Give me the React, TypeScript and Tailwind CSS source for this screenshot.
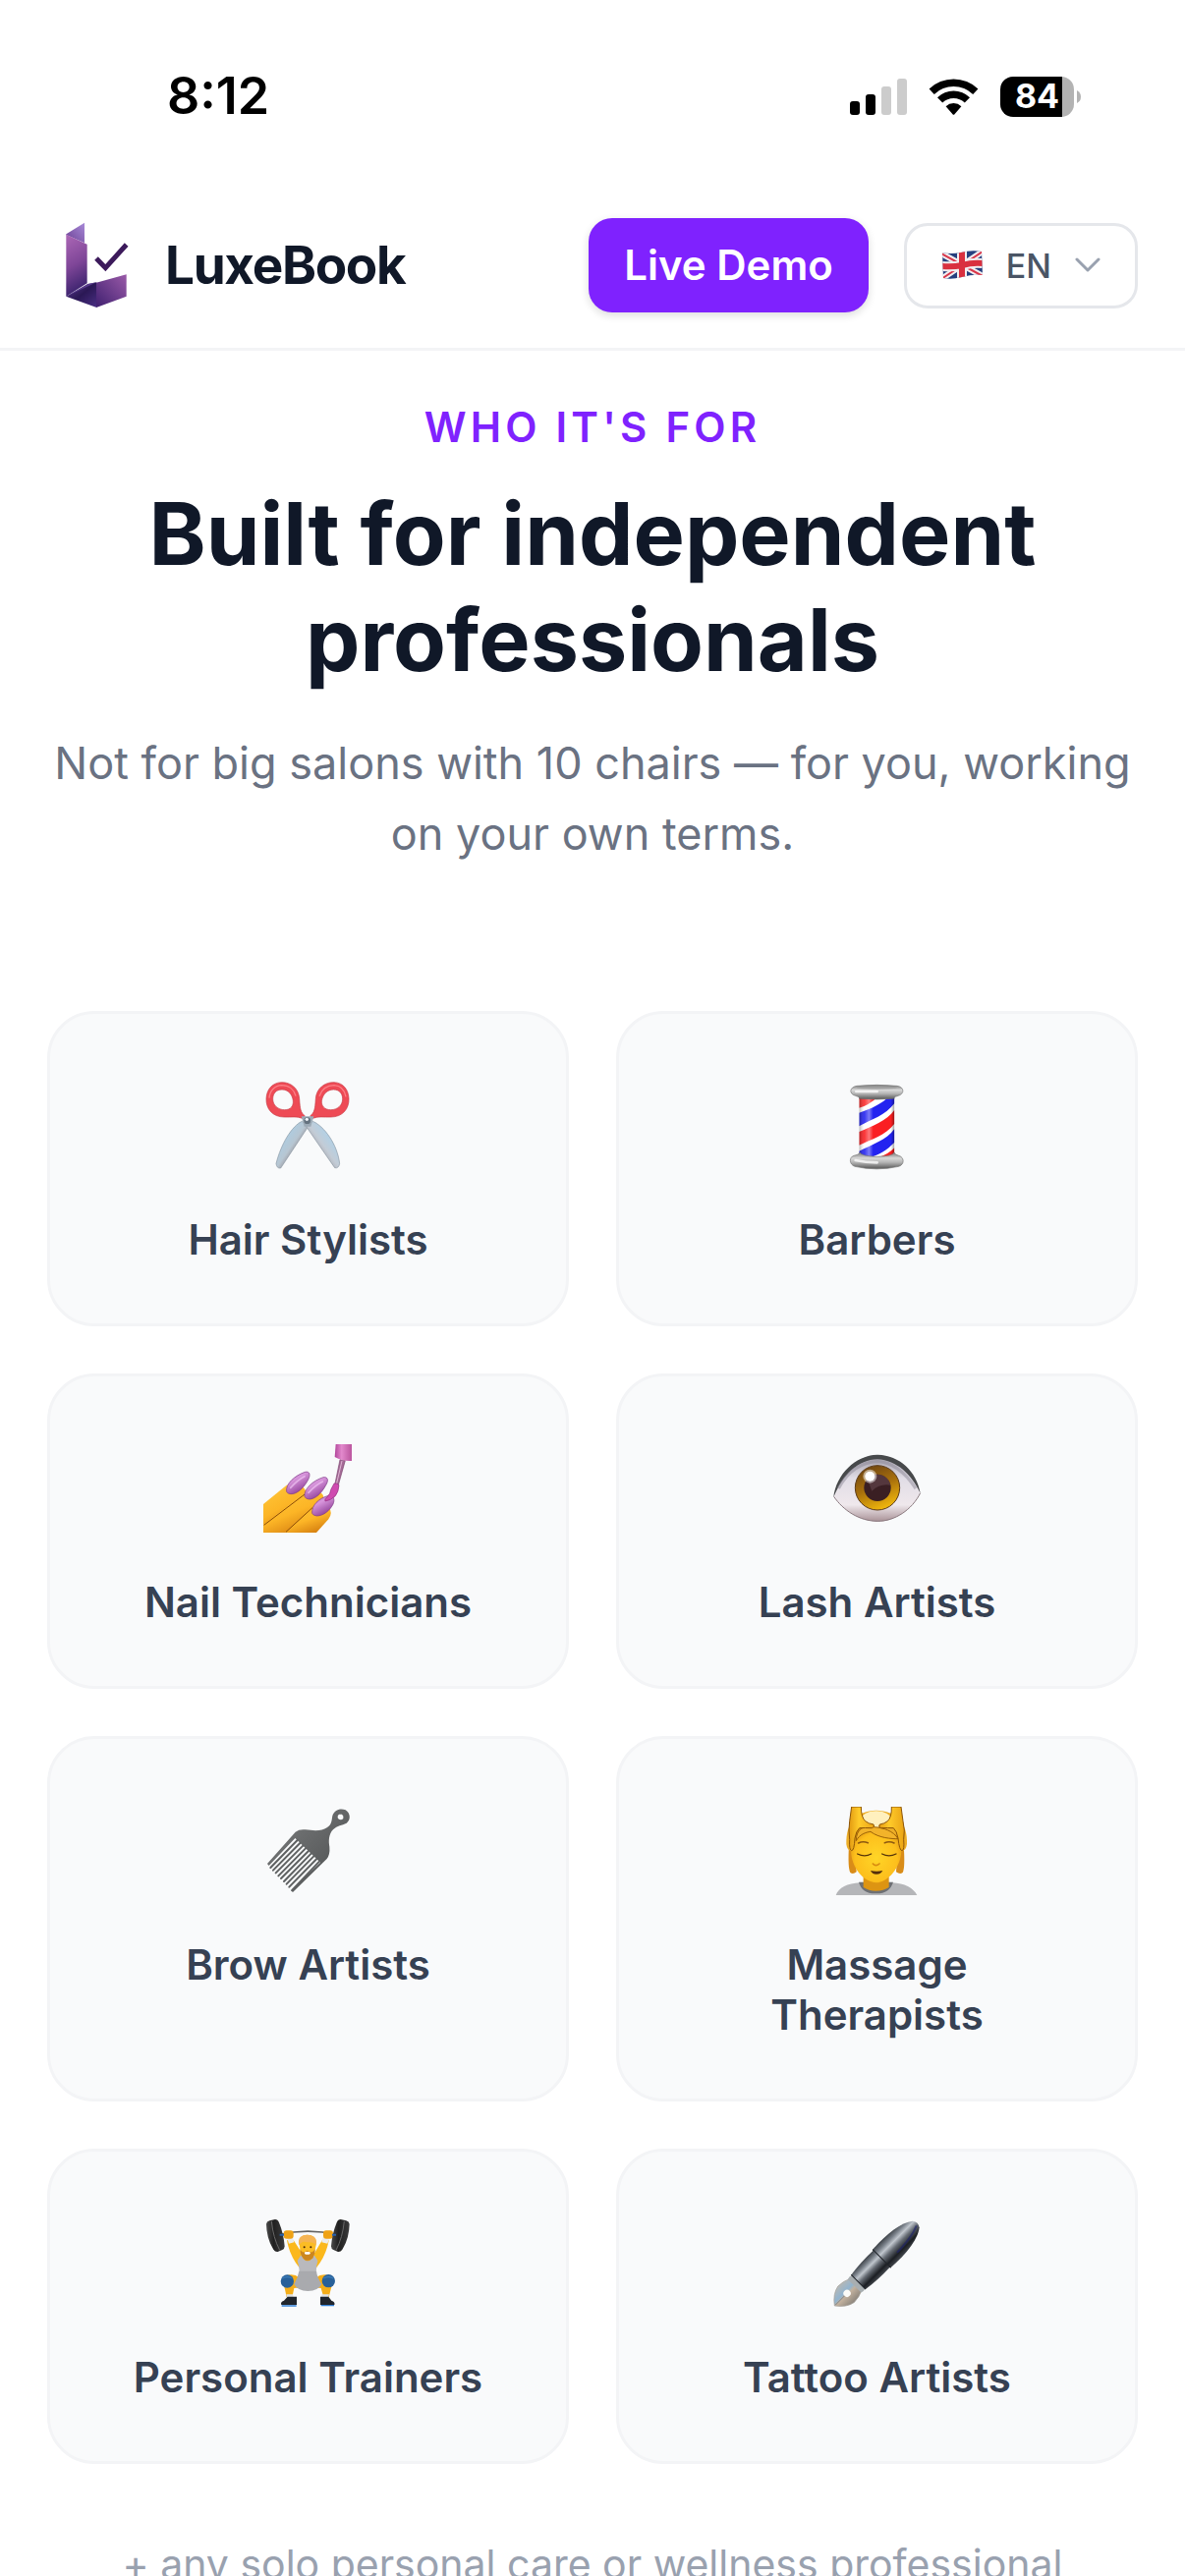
import type { ReactNode } from 'react'

interface Audience {
  label: string
  icon: ReactNode
}

function Logo() {
  return (
    <svg viewBox="24 21 288 288" className="size-24" aria-hidden="true">
      <defs>
        <linearGradient id="logoTop" x1="1" y1="0" x2="0" y2="1">
          <stop offset="0" stopColor="#a88ad8" />
          <stop offset="1" stopColor="#6b3f93" />
        </linearGradient>
        <linearGradient id="logoStem" x1="0.2" y1="0" x2="0.4" y2="1">
          <stop offset="0" stopColor="#a965b4" />
          <stop offset="0.5" stopColor="#7f4698" />
          <stop offset="1" stopColor="#35206a" />
        </linearGradient>
        <linearGradient id="logoFold" x1="0" y1="0" x2="1" y2="1">
          <stop offset="0" stopColor="#5c3c92" />
          <stop offset="0.5" stopColor="#2b1855" />
          <stop offset="1" stopColor="#4a2f84" />
        </linearGradient>
        <linearGradient id="logoFoot" x1="0" y1="1" x2="1" y2="0">
          <stop offset="0" stopColor="#3f2070" />
          <stop offset="1" stopColor="#9a5aa8" />
        </linearGradient>
      </defs>
      <path d="M82 70 L138 35 V97 L82 72 Z" fill="url(#logoTop)" />
      <path d="M82 71 L146 101 V220 L82 260 Z" fill="url(#logoStem)" />
      <path d="M82 260 L148 222 L175 217 V294 Z" fill="url(#logoFold)" />
      <path d="M82 260 L148 222 L175 217 Z" fill="#65469d" opacity="0.7" />
      <path d="M174 218 L266 193 V260 L174 294 Z" fill="url(#logoFoot)" />
      <path d="M174 144 L202 173 L266 102" fill="none" stroke="#3c1a5b" strokeWidth="15" />
    </svg>
  )
}

function Scissors() {
  return (
    <svg viewBox="85 60 270 270" className="size-[90px]" role="img" aria-label="Scissors">
      <defs>
        <linearGradient id="bladeA" x1="0" y1="0" x2="1" y2="1">
          <stop offset="0.2" stopColor="#a9cfe8" />
          <stop offset="0.5" stopColor="#b7c6d2" />
          <stop offset="0.7" stopColor="#8d7e80" />
        </linearGradient>
        <linearGradient id="bladeB" x1="1" y1="0" x2="0" y2="1">
          <stop offset="0.2" stopColor="#a9d3ee" />
          <stop offset="0.5" stopColor="#c3ccd6" />
          <stop offset="0.8" stopColor="#958a8e" />
        </linearGradient>
      </defs>
      <path d="M200 181 C168 196 136 251 121 310 Q123 326 135 324 L219 197 Z" fill="url(#bladeA)" stroke="#8b99a5" strokeWidth="2" />
      <path d="M233 181 C268 196 308 251 315 310 Q312 326 300 323 L213 197 Z" fill="url(#bladeB)" stroke="#8b99a5" strokeWidth="2" />
      <path fillRule="evenodd" d="M137 62 C165 61 190 80 192 112 C194 145 196 154 209 165 L201 172 C185 165 167 169 146 168 C110 168 90 143 91 112 C92 83 110 63 137 62 Z M139 84 C121 84 111 96 111 113 C111 132 127 146 147 146 C166 146 174 134 173 119 C171 99 158 84 139 84 Z" fill="#ee4a55" stroke="#c73a44" strokeWidth="2" />
      <path fillRule="evenodd" d="M298 62 C270 61 244 80 242 112 C240 145 238 154 225 165 L233 172 C249 165 267 169 288 168 C324 168 344 143 343 112 C342 83 325 63 298 62 Z M296 84 C314 84 324 96 324 113 C324 132 308 146 288 146 C269 146 259 134 260 119 C263 99 277 84 296 84 Z" fill="#ee4a55" stroke="#c73a44" strokeWidth="2" />
      <path d="M100 110 C102 86 118 72 138 71 C160 71 176 84 181 104" fill="none" stroke="#ff8d92" strokeWidth="4" opacity="0.8" />
      <path d="M253 104 C260 84 276 71 298 71 C318 72 330 86 334 106" fill="none" stroke="#ff8d92" strokeWidth="4" opacity="0.8" />
      <path d="M198 166 H236 L227 197 H207 Z" fill="#9caab6" />
      <circle cx="216" cy="179" r="10" fill="#64727f" />
      <circle cx="215" cy="175" r="5" fill="#f2f6fa" />
    </svg>
  )
}

function BarberPole() {
  return (
    <svg viewBox="52 60 270 270" className="size-[90px]" role="img" aria-label="Barber pole">
      <defs>
        <linearGradient id="poleCap" x1="0" y1="0" x2="0" y2="1">
          <stop offset="0" stopColor="#777" />
          <stop offset="0.35" stopColor="#d8d8d8" />
          <stop offset="0.6" stopColor="#b5b5b5" />
          <stop offset="1" stopColor="#555" />
        </linearGradient>
        <linearGradient id="poleShine" x1="0" y1="0" x2="1" y2="0">
          <stop offset="0" stopColor="#000" stopOpacity="0.3" />
          <stop offset="0.15" stopColor="#fff" stopOpacity="0.1" />
          <stop offset="0.28" stopColor="#fff" stopOpacity="0.4" />
          <stop offset="0.4" stopColor="#fff" stopOpacity="0" />
          <stop offset="0.9" stopColor="#000" stopOpacity="0" />
          <stop offset="1" stopColor="#000" stopOpacity="0.4" />
        </linearGradient>
        <clipPath id="poleBody">
          <rect x="131" y="104" width="108" height="186" />
        </clipPath>
      </defs>
      <g clipPath="url(#poleBody)">
        <rect x="131" y="100" width="108" height="192" fill="#fff" />
        <path d="M131 96 H200 Q160 134 131 140 Z" fill="#fa2a2a" />
        <path d="M131 155 C170 142 205 126 226 100 H239 V126 C210 164 170 174 131 196 Z" fill="#2323f0" />
        <path d="M131 213 C170 196 215 180 239 146 V188 C210 226 170 234 131 254 Z" fill="#fa1f22" />
        <path d="M131 272 C170 252 215 238 239 204 V245 C215 270 190 284 160 292 H131 Z" fill="#2323f0" />
        <path d="M188 292 Q220 282 239 262 V292 Z" fill="#fa1f22" />
        <rect x="131" y="100" width="108" height="192" fill="url(#poleShine)" />
      </g>
      <path d="M131 104 H239 V113 H131 Z" fill="#444" opacity="0.55" />
      <path d="M124 73 Q185 67 247 73 C270 76 270 98 250 103 Q240 105 236 111 Q185 117 133 111 Q129 105 120 103 C100 98 100 77 124 73 Z" fill="url(#poleCap)" stroke="#777" strokeWidth="2" />
      <ellipse cx="185" cy="78" rx="62" ry="5" fill="#999" opacity="0.6" />
      <path d="M122 90 H186" stroke="#fff" strokeWidth="8" strokeLinecap="round" opacity="0.75" />
      <path d="M133 276 Q130 284 115 286 C100 290 100 313 118 319 Q185 334 252 319 C270 313 270 291 252 286 Q241 284 238 276 Q236 287 185 289 Q137 287 133 276 Z" fill="url(#poleCap)" stroke="#777" strokeWidth="2" />
      <path d="M120 300 Q150 307 186 307" stroke="#fff" strokeWidth="8" fill="none" strokeLinecap="round" opacity="0.75" />
    </svg>
  )
}

function NailPolish() {
  return (
    <svg viewBox="84 57 270 270" className="size-[90px] overflow-visible" role="img" aria-label="Nail polish">
      <defs>
        <linearGradient id="finger" x1="0" y1="0" x2="0.6" y2="1">
          <stop offset="0" stopColor="#ffc93c" />
          <stop offset="0.6" stopColor="#fcb526" />
          <stop offset="1" stopColor="#d98412" />
        </linearGradient>
        <linearGradient id="nail" x1="0" y1="0" x2="0.6" y2="1">
          <stop offset="0" stopColor="#a65cb0" />
          <stop offset="0.4" stopColor="#d896dc" />
          <stop offset="1" stopColor="#8b3a94" />
        </linearGradient>
        <linearGradient id="brushCap" x1="0" y1="0" x2="1" y2="0">
          <stop offset="0" stopColor="#b1459a" />
          <stop offset="0.4" stopColor="#e289cc" />
          <stop offset="1" stopColor="#bb559e" />
        </linearGradient>
      </defs>
      <path d="M81 240 L152 182 Q175 172 196 184 Q216 198 211 212 L87 306 H81 Z" fill="url(#finger)" />
      <path d="M81 304 L202 208 Q222 195 244 199 Q270 208 265 228 L152 327 H81 Z" fill="url(#finger)" />
      <path d="M148 327 L232 250 Q262 240 282 252 Q294 266 280 286 L243 327 Z" fill="url(#finger)" />
      <path d="M83 304 L207 210 M150 325 L232 250" stroke="#8a4a07" strokeWidth="3" fill="none" />
      <path d="M152 202 C148 178 178 152 208 142 C224 138 225 152 218 165 C205 190 184 210 165 209 Q155 209 152 202 Z" fill="url(#nail)" stroke="#7d3b86" strokeWidth="2" />
      <path d="M207 217 C204 194 232 168 264 158 C280 156 280 169 272 182 C258 208 238 226 220 225 Q210 224 207 217 Z" fill="url(#nail)" stroke="#7d3b86" strokeWidth="2" />
      <path d="M230 268 C228 244 250 222 280 214 C296 212 300 226 294 240 C284 260 264 276 244 276 Q233 275 230 268 Z" fill="url(#nail)" stroke="#7d3b86" strokeWidth="2" />
      <path d="M164 190 Q184 167 207 155 M219 205 Q240 182 262 171" stroke="#f0c4f2" strokeWidth="5" strokeLinecap="round" fill="none" opacity="0.7" />
      <path d="M315 104 L331 107 L309 185 L299 182 Z" fill="#a46b96" stroke="#7c4470" strokeWidth="2" />
      <path d="M321 108 L304 180" stroke="#e0b5d4" strokeWidth="3" />
      <path d="M297 177 Q306 174 312 182 Q311 203 300 216 Q286 229 270 231 Q266 225 277 217 Q286 208 287 196 Z" fill="#cf4bb0" stroke="#93307e" strokeWidth="2" />
      <path d="M302 57 H351 V108 Q324 110 299 96 Z" fill="url(#brushCap)" />
    </svg>
  )
}

function Eye() {
  return (
    <svg viewBox="82 57 270 270" className="size-[90px]" role="img" aria-label="Eye">
      <defs>
        <linearGradient id="eyeWhite" x1="0" y1="0" x2="0" y2="1">
          <stop offset="0" stopColor="#9d98a4" />
          <stop offset="0.35" stopColor="#e1dde6" />
          <stop offset="0.75" stopColor="#efe8ec" />
          <stop offset="1" stopColor="#a99297" />
        </linearGradient>
        <linearGradient id="iris" x1="0.2" y1="0" x2="0.6" y2="1">
          <stop offset="0" stopColor="#6b4212" />
          <stop offset="0.5" stopColor="#a8700c" />
          <stop offset="1" stopColor="#f2b80c" />
        </linearGradient>
      </defs>
      <path d="M84 211 C112 136 158 91 217 90 C278 92 326 136 348 204 C322 258 270 293 218 293 C160 292 112 258 84 217 Z" fill="url(#eyeWhite)" />
      <path d="M83 219 C90 150 150 90 217 89 C286 91 336 140 348 206 C320 150 278 106 217 103 C158 104 112 150 83 219 Z" fill="#47494b" />
      <path d="M98 192 C126 140 166 112 217 110 C268 112 306 150 334 192" fill="none" stroke="#8d8998" strokeWidth="10" opacity="0.5" />
      <path d="M84 217 C112 258 160 292 218 292 C270 292 322 258 348 206" fill="none" stroke="#8c7b81" strokeWidth="3" />
      <circle cx="217" cy="190" r="68" fill="url(#iris)" stroke="#5b3a17" strokeWidth="3" />
      <circle cx="217" cy="190" r="41" fill="#3a1f23" />
      <path d="M186 163 A41 41 0 0 1 257 182 Q225 176 200 200 Z" fill="#6d5058" opacity="0.5" />
      <circle cx="194" cy="155" r="21" fill="#fff" opacity="0.5" />
      <circle cx="194" cy="155" r="15" fill="#fff" />
    </svg>
  )
}

function Comb() {
  return (
    <svg viewBox="85 54 270 270" className="size-[90px]" role="img" aria-label="Hair pick">
      <defs>
        <linearGradient id="comb" x1="0" y1="0" x2="1" y2="1">
          <stop offset="0" stopColor="#7d7f80" />
          <stop offset="0.5" stopColor="#636566" />
          <stop offset="1" stopColor="#484a4b" />
        </linearGradient>
      </defs>
      <path fillRule="evenodd" d="M94 228 L180 131 Q192 122 210 124 C240 128 262 128 276 118 C292 108 290 96 293 82 C298 63 318 57 333 64 C349 74 349 95 336 104 C322 112 308 110 295 124 C281 138 281 160 284 176 Q286 200 276 213 L172 315 L166 310 L256 224 L179 150 L99 234 Z M313 77 Q306 83 311 91 Q319 97 326 90 Q328 81 322 77 Z" fill="url(#comb)" />
      <path d="M186 156 L104 240 M194 165 L112 248 M203 173 L120 256 M211 181 L128 265 M220 189 L136 273 M228 197 L145 282 M236 205 L153 290 M245 213 L161 299 M253 221 L170 309" stroke="#5f6162" strokeWidth="6" strokeLinecap="round" />
    </svg>
  )
}

function Massage() {
  return (
    <svg viewBox="82 54 270 270" className="size-[90px]" role="img" aria-label="Head massage">
      <defs>
        <radialGradient id="massageFace" cx="0.5" cy="0.55" r="0.6">
          <stop offset="0" stopColor="#ffd527" />
          <stop offset="0.7" stopColor="#fdbf1c" />
          <stop offset="1" stopColor="#de9210" />
        </radialGradient>
        <linearGradient id="massageHand" x1="0" y1="0" x2="1" y2="0">
          <stop offset="0" stopColor="#e39a12" />
          <stop offset="0.4" stopColor="#ffcb2a" />
          <stop offset="1" stopColor="#eaa416" />
        </linearGradient>
      </defs>
      <path d="M90 324 C98 302 125 288 164 286 H262 C300 288 326 302 338 324 Z" fill="#b5b6b9" />
      <path d="M130 170 Q126 240 134 255 Q142 262 153 253 L150 200 Z M297 170 Q302 240 294 255 Q286 262 274 253 L278 200 Z" fill="#d98c18" />
      <path d="M160 284 Q170 320 212 319 Q254 320 265 284 Z" fill="#6e7074" />
      <path d="M174 268 V300 Q190 311 212 311 Q236 311 252 300 V268 Z" fill="#dd9412" />
      <path d="M122 168 C120 102 154 66 213 65 C274 66 309 102 307 168 Q304 190 290 190 H138 Q124 188 122 168 Z" fill="#edae27" />
      <ellipse cx="213" cy="92" rx="45" ry="25" fill="#fff0be" />
      <path d="M136 150 C148 120 172 110 200 118 L276 140 Q292 150 290 188 C288 240 250 284 213 286 C174 284 138 240 136 190 Z" fill="url(#massageFace)" />
      <path d="M152 158 C152 122 174 110 206 116 C236 118 266 128 280 152 C260 152 222 150 196 130 C182 132 162 138 152 158 Z" fill="#f2b32a" stroke="#9c6208" strokeWidth="3" />
      <path d="M138 54 H167 Q167 86 180 98 Q190 106 205 108 Q211 116 200 119 Q178 118 162 119 Q152 128 148 150 Q146 188 138 188 Q130 187 132 154 Q128 126 132 98 Z" fill="url(#massageHand)" stroke="#8c5406" strokeWidth="3" />
      <path d="M289 54 H260 Q261 86 248 98 Q238 106 224 108 Q218 116 228 119 Q250 118 266 119 Q276 128 280 150 Q284 188 292 188 Q300 187 297 154 Q302 126 295 98 Z" fill="url(#massageHand)" stroke="#8c5406" strokeWidth="3" />
      <path d="M159 165 Q172 158 188 164 M239 164 Q254 158 268 165" stroke="#8d5910" strokeWidth="5" fill="none" strokeLinecap="round" />
      <path d="M156 198 Q178 209 198 198 M231 198 Q252 209 274 198" stroke="#573509" strokeWidth="4" fill="none" strokeLinecap="round" />
      <path d="M203 228 Q212 238 223 228" stroke="#d88b10" strokeWidth="5" fill="none" strokeLinecap="round" />
      <path d="M196 249 Q214 253 233 249 Q228 260 214 260 Q200 260 196 249 Z" fill="#552f0c" />
    </svg>
  )
}

function Weightlifter() {
  return (
    <svg viewBox="85 54 270 270" className="size-[90px]" role="img" aria-label="Weightlifter">
      <defs>
        <linearGradient id="plate" x1="0" y1="0" x2="1" y2="0">
          <stop offset="0" stopColor="#4a4a4a" />
          <stop offset="0.4" stopColor="#202020" />
          <stop offset="1" stopColor="#3b3b3b" />
        </linearGradient>
      </defs>
      <path d="M130 101 Q218 80 306 101" fill="none" stroke="#646464" strokeWidth="5" />
      <path d="M154 118 L174 117 L208 170 L192 202 Q162 164 154 118 Z M282 118 L262 117 L230 170 L244 202 Q274 164 282 118 Z" fill="#fbb81c" />
      <path d="M155 112 L172 109 L176 124 L160 128 Z M283 112 L264 109 L260 124 L278 128 Z" fill="#ececec" />
      <rect x="144" y="88" width="30" height="25" rx="9" fill="#efa216" />
      <rect x="265" y="88" width="30" height="25" rx="9" fill="#efa216" />
      <path d="M196 164 Q216 176 238 164 L248 180 Q240 212 246 240 Q218 250 190 240 Q196 212 186 180 Z" fill="#b9b9bd" />
      <path d="M202 172 Q216 190 234 172 L230 160 H206 Z" fill="#eaa113" />
      {/* legs */}
      <path d="M192 232 Q174 218 152 226 Q138 240 148 268 L153 292 H170 L176 264 Q186 262 196 266 Z" fill="#f4ad19" />
      <path d="M242 232 Q262 218 284 226 Q298 240 288 268 L282 292 H266 L258 264 Q250 262 240 266 Z" fill="#f4ad19" />
      <path d="M191 212 Q188 230 176 252 Q186 272 218 273 Q250 272 260 252 Q246 230 244 212 Z" fill="#a9aaae" />
      <circle cx="155" cy="243" r="20" fill="#286099" />
      <circle cx="281" cy="242" r="20" fill="#286099" />
      <path d="M140 234 Q154 226 170 234 M266 234 Q280 225 296 234" stroke="#3e7db8" strokeWidth="4" fill="none" />
      <path d="M152 283 H172 L175 296 H155 Z M261 283 H283 L279 296 H258 Z" fill="#dfe2e5" />
      <path d="M156 290 H184 V315 H137 Q133 306 145 302 Z" fill="#20252c" />
      <path d="M281 290 H256 V315 H299 Q302 306 290 302 Z" fill="#20252c" />
      <path d="M138 318 H183 M258 317 H298" stroke="#2f7fd6" strokeWidth="4" />
      <path d="M192 130 Q188 102 216 101 Q247 102 243 132 L238 158 Q230 176 216 177 Q202 176 196 158 Z" fill="#fbbc24" />
      <path d="M194 144 Q202 162 216 149 Q231 162 240 144 Q240 178 216 179 Q196 177 194 144 Z" fill="#cc8620" />
      <path d="M191 133 Q184 102 216 101 Q250 103 243 133 Q236 122 216 124 Q200 118 191 133 Z" fill="#f5b453" />
      <circle cx="207" cy="139" r="3" fill="#442708" />
      <circle cx="227" cy="139" r="3" fill="#442708" />
      <rect x="208" y="153" width="17" height="8" rx="4" fill="#fff" />
      <path d="M91 68 Q92 60 101 58 L118 54 Q126 54 130 64 Q144 98 147 136 Q147 144 140 147 L126 153 Q118 154 113 146 Q92 112 91 68 Z" fill="url(#plate)" />
      <path d="M345 68 Q344 60 335 58 L318 54 Q310 54 306 64 Q292 98 289 136 Q289 144 296 147 L310 153 Q318 154 323 146 Q344 112 345 68 Z" fill="url(#plate)" />
      <path d="M107 60 Q112 110 132 148 M329 60 Q324 110 304 148" stroke="#686868" strokeWidth="3" fill="none" />
      <path d="M132 101 H145 M292 101 H304" stroke="#2661ad" strokeWidth="6" />
    </svg>
  )
}

function FountainPen() {
  return (
    <svg viewBox="82 54 270 270" className="size-[90px]" role="img" aria-label="Fountain pen">
      <defs>
        <linearGradient id="penBody" x1="0" y1="0" x2="0" y2="1">
          <stop offset="0" stopColor="#3c4147" />
          <stop offset="0.2" stopColor="#7b828b" />
          <stop offset="0.36" stopColor="#c0c6cd" />
          <stop offset="0.55" stopColor="#646a72" />
          <stop offset="0.8" stopColor="#1b1e23" />
          <stop offset="1" stopColor="#44484e" />
        </linearGradient>
        <linearGradient id="nib" x1="0" y1="0" x2="0" y2="1">
          <stop offset="0" stopColor="#b5b8b7" />
          <stop offset="0.4" stopColor="#92b4cf" />
          <stop offset="0.55" stopColor="#c2b19e" />
          <stop offset="1" stopColor="#8c857c" />
        </linearGradient>
      </defs>
      {/* drawn flat with the nib on the left, then tilted */}
      <g transform="translate(86 318) rotate(-45)">
        <path d="M0 0 Q22 -30 50 -35 Q74 -34 90 -26 V26 Q74 34 50 35 Q22 30 0 0 Z" fill="url(#nib)" stroke="#a6a29c" strokeWidth="2" />
        <path d="M4 0 H48" stroke="#77716b" strokeWidth="2" />
        <circle cx="54" cy="0" r="11" fill="#fbfbf8" />
        <path d="M86 -29 Q96 -32 103 -29 V29 Q96 32 86 29 Z" fill="#a8aeb1" />
        <path d="M102 -31 Q150 -38 205 -36 V36 Q150 38 102 31 Z" fill="url(#penBody)" />
        <path d="M202 -39 C262 -43 322 -38 352 -14 Q362 0 352 14 C322 38 262 43 202 39 Z" fill="url(#penBody)" />
        <path d="M204 -39 V39 M103 -31 V31" stroke="#20242a" strokeWidth="3" />
        <path d="M250 20 Q310 20 350 4" stroke="#1d226b" strokeWidth="6" fill="none" opacity="0.6" />
      </g>
    </svg>
  )
}

function UkFlag() {
  return (
    <svg viewBox="0 0 42 30" className="h-[30px] w-[42px]" aria-hidden="true">
      <clipPath id="flagShape">
        <path d="M1 2 Q9 4 20 2 Q31 -1 41 1 L42 25 Q32 24 21 27 Q10 30 2 28 Z" />
      </clipPath>
      <g clipPath="url(#flagShape)">
        <rect width="42" height="30" fill="#26407f" />
        <path d="M0 3 L42 26 M42 1 L0 29" stroke="#f2eef0" strokeWidth="6" />
        <path d="M0 3 L42 26 M42 1 L0 29" stroke="#d9364a" strokeWidth="2" />
        <path d="M21 0 V30 M0 16 Q12 17 21 15 Q32 12 42 13" fill="none" stroke="#f2eef0" strokeWidth="10" />
        <path d="M21 0 V30 M0 16 Q12 17 21 15 Q32 12 42 13" fill="none" stroke="#d9303f" strokeWidth="6" />
      </g>
    </svg>
  )
}

const audiences: Audience[] = [
  { label: 'Hair Stylists', icon: <Scissors /> },
  { label: 'Barbers', icon: <BarberPole /> },
  { label: 'Nail Technicians', icon: <NailPolish /> },
  { label: 'Lash Artists', icon: <Eye /> },
  { label: 'Brow Artists', icon: <Comb /> },
  { label: 'Massage Therapists', icon: <Massage /> },
  { label: 'Personal Trainers', icon: <Weightlifter /> },
  { label: 'Tattoo Artists', icon: <FountainPen /> }
]

function StatusBar() {
  return (
    <div className="flex shrink-0 h-[186px] items-start justify-between pt-[66px] pr-[106px] pl-[170px]">
      <span className="text-[52px] leading-[64px] font-semibold text-black">8:12</span>
      <div className="flex h-16 items-center">
        <svg viewBox="0 0 58 37" className="mr-[22px] h-[37px] w-[58px]" aria-hidden="true">
          <rect x="0" y="23" width="10" height="14" rx="3" fill="#000" />
          <rect x="16" y="16" width="10" height="21" rx="3" fill="#000" />
          <rect x="32" y="8" width="10" height="29" rx="3" fill="#ccc" />
          <rect x="48" y="0" width="10" height="37" rx="3" fill="#ccc" />
        </svg>
        <svg viewBox="0 0 51 37" className="mr-[22px] h-[37px] w-[51px]" aria-hidden="true">
          <path d="M0.6 10.4 A36 36 0 0 1 50.4 10.4 L45.2 15.9 A28.5 28.5 0 0 0 5.8 15.9 Z" />
          <path d="M9 19.2 A23.8 23.8 0 0 1 42 19.2 L36.8 24.6 A16.3 16.3 0 0 0 14.2 24.6 Z" />
          <path d="M17.6 28.2 A11.6 11.6 0 0 1 33.4 28.2 L26.5 36.2 Q25.5 37.3 24.5 36.2 Z" />
        </svg>
        <div className="flex h-[41px] w-[75px] items-center justify-center rounded-[13px] bg-[linear-gradient(to_right,#000_84%,#b3b3b3_84%)] text-[34px] leading-none font-bold text-white">
          84
        </div>
        <svg viewBox="0 0 4 13" className="ml-[3px] h-[13px] w-1" aria-hidden="true">
          <path d="M0 0 Q4 2 4 6.5 Q4 11 0 13 Z" fill="#b3b3b3" />
        </svg>
      </div>
    </div>
  )
}

export default function App() {
  return (
    <div className="flex h-screen flex-col overflow-hidden bg-white font-['Inter','Liberation_Sans',sans-serif]">
      <StatusBar />

      <header className="flex shrink-0 items-center justify-between border-b-3 border-gray-100 px-12 py-9">
        <a href="#" className="flex items-center gap-6">
          <Logo />
          <span className="text-[53px] leading-[72px] font-bold tracking-tight text-gray-900">LuxeBook</span>
        </a>
        <div className="flex items-center gap-9">
          <button
            type="button"
            className="rounded-3xl bg-violet-600 px-9 py-[18px] text-[42px] leading-[60px] font-semibold text-white shadow-[0_3px_9px_rgba(0,0,0,0.14)]"
          >
            Live Demo
          </button>
          <button
            type="button"
            className="flex items-center gap-6 rounded-3xl border-3 border-gray-200 px-[35px] py-[18px] text-[34px] leading-[45px] font-medium text-gray-600"
          >
            <UkFlag />
            EN
            <svg viewBox="0 0 26 16" className="h-4 w-[26px]" fill="none" aria-hidden="true">
              <path d="M2 2 L13 13 L24 2" stroke="#99a1af" strokeWidth="3" strokeLinecap="round" strokeLinejoin="round" />
            </svg>
          </button>
        </div>
      </header>

      <main className="min-h-0 flex-1 overflow-hidden px-12 pt-12 text-center">
        <p className="mb-6 text-[42px] leading-[60px] font-semibold tracking-widest text-violet-600 uppercase">Who it's for</p>
        <h1 className="mb-9 text-[88px] leading-[108px] font-bold text-gray-900">
          Built for independent professionals
        </h1>
        <p className="mb-36 text-[45px] leading-[72px] text-gray-500">
          Not for big salons with 10 chairs — for you, working on your own terms.
        </p>

        <ul className="grid grid-cols-2 gap-12">
          {audiences.map((audience) => (
            <li
              key={audience.label}
              className="flex flex-col items-center rounded-[48px] border-3 border-gray-100 bg-gray-50 p-15"
            >
              <div className="mb-9 flex h-27 items-center">{audience.icon}</div>
              <h2 className="text-[42px] leading-[51px] font-semibold text-gray-700">{audience.label}</h2>
            </li>
          ))}
        </ul>

        <p className="mt-18 text-[41px] leading-[60px] text-gray-400">
          + any solo personal care or wellness professional
        </p>
      </main>
    </div>
  )
}
